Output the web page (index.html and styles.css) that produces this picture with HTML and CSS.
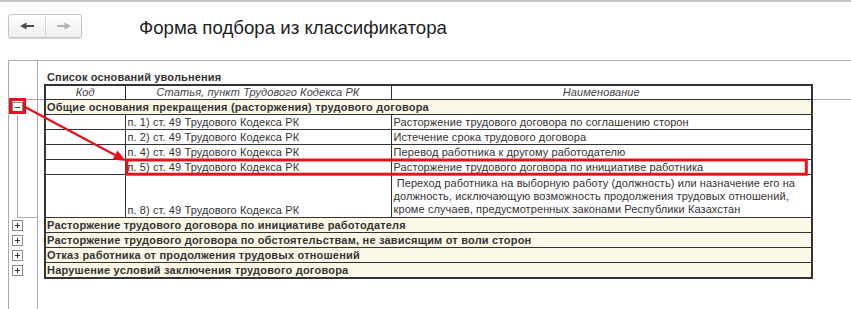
FILE: index.html
```html
<!DOCTYPE html>
<html lang="ru">

<head>
    <meta charset="UTF-8">
    <title>Форма подбора из классификатора</title>
    <link rel="stylesheet" href="styles.css">
</head>

<body>
    <div class="topbar">
        <div class="nav">
            <button class="nav-btn" type="button">
                <svg width="14" height="8" viewBox="0 0 14 8"><path d="M0 4 L6.5 0.5 V3 H14 V5 H6.5 V7.5 Z" fill="#4b4b4b"/></svg>
            </button>
            <button class="nav-btn next" type="button">
                <svg width="14" height="8" viewBox="0 0 14 8"><path d="M14 4 L7.5 0.5 V3 H0 V5 H7.5 V7.5 Z" fill="#b4b4b4"/></svg>
            </button>
        </div>
        <h1 class="title">Форма подбора из классификатора</h1>
    </div>

    <div class="form">
        <!-- tree toggles on the left -->
        <div class="tree">
            <div class="tree-head"></div>
            <div class="node"><span class="toggle minus"></span></div>
            <div class="branch"></div>
            <div class="node"><span class="toggle plus"></span></div>
            <div class="node"><span class="toggle plus"></span></div>
            <div class="node"><span class="toggle plus"></span></div>
            <div class="node"><span class="toggle plus"></span></div>
        </div>

        <div class="content">
            <div class="caption">Список оснований увольнения</div>
            <table class="grid">
                <colgroup>
                    <col class="c-code">
                    <col class="c-art">
                    <col>
                </colgroup>
                <thead>
                    <tr>
                        <th>Код</th>
                        <th>Статья, пункт Трудового Кодекса РК</th>
                        <th>Наименование</th>
                    </tr>
                </thead>
                <tbody>
                    <tr class="group">
                        <td colspan="3">Общие основания прекращения (расторжения) трудового договора</td>
                    </tr>
                    <tr>
                        <td></td>
                        <td>п. 1) ст. 49 Трудового Кодекса РК</td>
                        <td>Расторжение трудового договора по соглашению сторон</td>
                    </tr>
                    <tr>
                        <td></td>
                        <td>п. 2) ст. 49 Трудового Кодекса РК</td>
                        <td>Истечение срока трудового договора</td>
                    </tr>
                    <tr>
                        <td></td>
                        <td>п. 4) ст. 49 Трудового Кодекса РК</td>
                        <td>Перевод работника к другому работодателю</td>
                    </tr>
                    <tr>
                        <td></td>
                        <td>п. 5) ст. 49 Трудового Кодекса РК</td>
                        <td>Расторжение трудового договора по инициативе работника</td>
                    </tr>
                    <tr class="tall">
                        <td></td>
                        <td class="bottom">п. 8) ст. 49 Трудового Кодекса РК</td>
                        <td>&nbsp;Переход работника на выборную работу (должность) или назначение его на<br>должность, исключающую возможность продолжения трудовых отношений,<br>кроме случаев, предусмотренных законами Республики Казахстан</td>
                    </tr>
                    <tr class="group">
                        <td colspan="3">Расторжение трудового договора по инициативе работодателя</td>
                    </tr>
                    <tr class="group">
                        <td colspan="3">Расторжение трудового договора по обстоятельствам, не зависящим от воли сторон</td>
                    </tr>
                    <tr class="group">
                        <td colspan="3">Отказ работника от продолжения трудовых отношений</td>
                    </tr>
                    <tr class="group">
                        <td colspan="3">Нарушение условий заключения трудового договора</td>
                    </tr>
                </tbody>
            </table>
        </div>
    </div>

    <!-- red annotation drawn over the screenshot -->
    <svg class="marks" width="851" height="309" viewBox="0 0 851 309">
        <rect x="10.5" y="99.5" width="14" height="13" fill="none" stroke="#e3121c" stroke-width="3"/>
        <rect x="126.8" y="160" width="679.5" height="14.2" fill="none" stroke="#e3121c" stroke-width="3"/>
        <line x1="25" y1="107" x2="115" y2="155" stroke="#e3121c" stroke-width="2.5"/>
        <polygon points="126,161 112.6,159.4 117.4,150.6" fill="#e3121c"/>
    </svg>
</body>

</html>
```

FILE: styles.css
```css
body {
    margin: 0;
    height: 100vh;
    display: flex;
    flex-direction: column;
    overflow: hidden;
    font-family: "Liberation Sans", Arial, sans-serif;
    color: #333;
    background-color: #fff;
}

.topbar {
    flex: none;
    height: 60px;
    box-sizing: border-box;
    border-top: 2px solid #c6c6c6;
    padding: 12px 0 0 8px;
    display: flex;
    align-items: flex-start;
}

.nav {
    display: flex;
    height: 24px;
    box-sizing: border-box;
    border: 1px solid #c4c4c4;
    border-radius: 3px;
    background: linear-gradient(#ffffff, #eeeeee);
    box-shadow: 0 1px 1px rgba(0, 0, 0, 0.18);
}

.nav-btn {
    width: 36px;
    height: 22px;
    padding: 0;
    border: none;
    background: none;
    display: flex;
    align-items: center;
    justify-content: center;
}

.nav-btn.next {
    width: 36px;
    border-left: 1px solid #d6d6d6;
}

.title {
    margin: 2px 0 0 57px;
    font-size: 18.67px;
    font-weight: normal;
    line-height: 24px;
    color: #1e1e1e;
}

.form {
    flex: 1;
    margin-left: 8px;
    border-top: 1px solid #acacac;
    border-left: 1px solid #acacac;
    display: grid;
    grid-template-columns: 29px 1fr;
}

.tree {
    border-right: 1px solid #acacac;
}

.tree-head {
    height: 38px;
    border-bottom: 1px solid #acacac;
}

.node {
    height: 15px;
    padding-left: 3px;
    display: flex;
    align-items: center;
}

.branch {
    height: 102px;
    margin-left: 8px;
    border-left: 1px solid #acacac;
    border-bottom: 1px solid #acacac;
}

.toggle {
    position: relative;
    width: 11px;
    height: 11px;
    box-sizing: border-box;
    border: 1px solid #8a8a8a;
    background-color: #fff;
}

.toggle::before {
    content: "";
    position: absolute;
    left: 2px;
    top: 4px;
    width: 5px;
    height: 1px;
    background-color: #333;
}

.toggle.plus::after {
    content: "";
    position: absolute;
    left: 4px;
    top: 2px;
    width: 1px;
    height: 5px;
    background-color: #333;
}

.content {
    background: linear-gradient(#acacac, #acacac) 0 38px / 100% 1px no-repeat;
}

.caption {
    padding: 10px 0 0 9px;
    font-size: 11px;
    font-weight: bold;
    line-height: 13px;
    letter-spacing: 0.15px;
}

.grid {
    margin-left: 6px;
    width: 769px;
    table-layout: fixed;
    border-collapse: collapse;
    border: 2px solid #333;
    font-size: 11px;
    letter-spacing: 0.1px;
    background-color: #fff;
}

.c-code {
    width: 80px;
}

.c-art {
    width: 266px;
}

.grid th,
.grid td {
    border: 1px solid #333;
    padding: 0 2px;
    line-height: 14px;
    text-align: left;
    vertical-align: top;
    white-space: nowrap;
    overflow: hidden;
}

.grid th {
    font-weight: normal;
    font-style: italic;
    text-align: center;
    line-height: 13px;
    color: #444;
}

.grid .group td {
    background-color: #fbf8e8;
    font-weight: bold;
    letter-spacing: 0.2px;
    padding-left: 1px;
}

.grid .tall td {
    line-height: 13px;
    padding-top: 2px;
    padding-bottom: 1px;
}

.grid .tall td.bottom {
    vertical-align: bottom;
    line-height: 14px;
    padding-bottom: 0;
}

.marks {
    position: absolute;
    left: 0;
    top: 0;
    pointer-events: none;
}
```
